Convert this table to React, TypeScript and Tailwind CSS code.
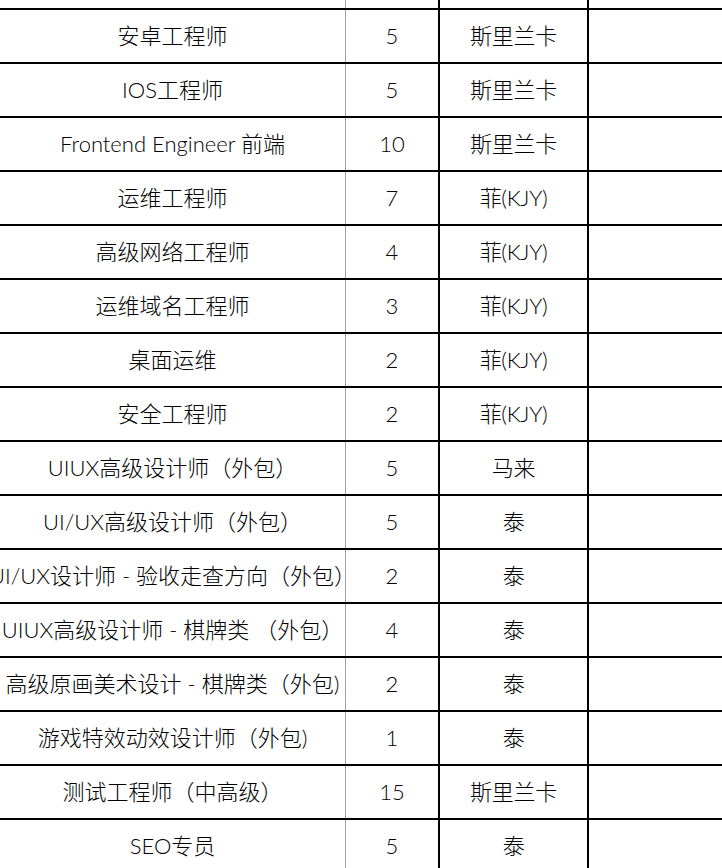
import React from "react";

type Row = {
  title: string;
  count: number;
  region: string;
};

const rows: Row[] = [
  { title: "安卓工程师", count: 5, region: "斯里兰卡" },
  { title: "IOS工程师", count: 5, region: "斯里兰卡" },
  { title: "Frontend Engineer 前端", count: 10, region: "斯里兰卡" },
  { title: "运维工程师", count: 7, region: "菲(KJY)" },
  { title: "高级网络工程师", count: 4, region: "菲(KJY)" },
  { title: "运维域名工程师", count: 3, region: "菲(KJY)" },
  { title: "桌面运维", count: 2, region: "菲(KJY)" },
  { title: "安全工程师", count: 2, region: "菲(KJY)" },
  { title: "UIUX高级设计师（外包）", count: 5, region: "马来" },
  { title: "UI/UX高级设计师（外包）", count: 5, region: "泰" },
  { title: "UI/UX设计师 - 验收走查方向（外包）", count: 2, region: "泰" },
  { title: "UIUX高级设计师 - 棋牌类 （外包）", count: 4, region: "泰" },
  { title: "高级原画美术设计 - 棋牌类（外包)", count: 2, region: "泰" },
  { title: "游戏特效动效设计师（外包)", count: 1, region: "泰" },
  { title: "测试工程师（中高级）", count: 15, region: "斯里兰卡" },
  { title: "SEO专员", count: 5, region: "泰" },
];

function Cells({ row }: { row?: Row }) {
  return (
    <>
      <div className="flex w-[346px] shrink-0 items-center justify-center overflow-hidden whitespace-nowrap border-r border-[#a3a3a3]">
        {row && <span>{row.title}</span>}
      </div>
      <div className="flex w-[94px] shrink-0 items-center justify-center border-r-2 border-black">
        {row && <span>{row.count}</span>}
      </div>
      <div className="flex w-[149px] shrink-0 items-center justify-center border-r-2 border-black">
        {row && <span className="tracking-[-0.3px]">{row.region}</span>}
      </div>
      <div className="flex-1" />
    </>
  );
}

export default function App() {
  return (
    <div className="h-[868px] w-[722px] overflow-hidden bg-white font-['Lato','Noto_Sans_CJK_SC',sans-serif] text-[22px] font-light leading-none text-black">
      {/* Tail of the row above */}
      <div className="flex h-[8px]">
        <Cells />
      </div>

      {rows.map((row) => (
        <div key={row.title} className="flex h-[54px] border-t-2 border-black">
          <Cells row={row} />
        </div>
      ))}
    </div>
  );
}
